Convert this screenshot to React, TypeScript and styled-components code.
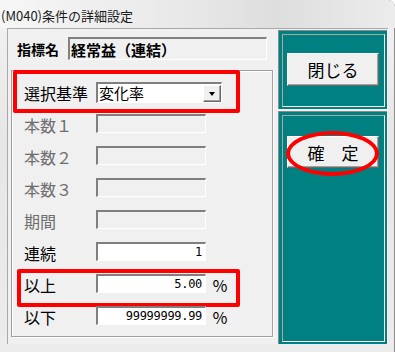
import React from 'react';
import styled, { createGlobalStyle } from 'styled-components';

const JP = `"Noto Sans CJK JP", "Noto Sans", sans-serif`;
const MONO = `"DejaVu Sans Mono", "Liberation Mono", monospace`;

const GlobalStyle = createGlobalStyle`
  body {
    margin: 0;
    background: #ffffff;
  }
  * {
    box-sizing: border-box;
  }
`;

const Window = styled.div`
  width: 395px;
  height: 352px;
  display: flex;
  flex-direction: column;
  background: linear-gradient(180deg, #f3f3f3 0%, #e6e6e6 40%, #ececec 100%);
  border-top-right-radius: 7px;
  box-shadow: inset -1px 1px 0 #8c8c8c;
  overflow: hidden;
`;

const TitleBar = styled.div`
  height: 28px;
  display: flex;
  align-items: center;
  padding: 2px 0 0 1px;
  background: linear-gradient(90deg, #f6f6f6 0%, #e9e9e9 45%, #dedede 70%, #ececec 100%);
`;

const Title = styled.span`
  font-family: ${JP};
  font-size: 13px;
  color: #1a1a1a;
`;

const Client = styled.div`
  margin-left: 7px;
  width: 381px;
  height: 316px;
  display: flex;
  background: #f0f0f0;
  border-top: 1px solid #a9a9a9;
  border-left: 1px solid #a9a9a9;
`;

const LeftCol = styled.div`
  width: 270px;
  display: flex;
  flex-direction: column;
`;

const NameRow = styled.div`
  margin-top: 8px;
  height: 23px;
  padding-left: 9px;
  display: flex;
  align-items: center;
`;

const NameLabel = styled.span`
  width: 51px;
  font-family: ${JP};
  font-size: 14px;
  font-weight: 700;
  color: #000;
`;

const NameBox = styled.div`
  width: 199px;
  height: 23px;
  display: flex;
  align-items: center;
  padding-left: 1px;
  border-style: solid;
  border-width: 2px 1px 1px 2px;
  border-color: #808080 #ffffff #ffffff #808080;
  background: #f0f0f0;
  font-family: ${JP};
  font-size: 15px;
  font-weight: 700;
  color: #000;
`;

const Panel = styled.div`
  margin: 10px 0 0 3px;
  width: 262px;
  height: 267px;
  padding: 11px 0 0 12px;
  border: 1px solid #a0a0a0;
  box-shadow: inset 1px 1px 0 #ffffff, 1px 1px 0 #ffffff;
  display: flex;
  flex-direction: column;
`;

const Rows = styled.div`
  margin-top: 11px;
  display: flex;
  flex-direction: column;
  gap: 13px;
`;

const Row = styled.div<{ $center?: boolean; $h: number }>`
  position: relative;
  height: ${(p) => p.$h}px;
  display: flex;
  align-items: ${(p) => (p.$center ? 'center' : 'flex-end')};
`;

const Label = styled.span<{ $disabled?: boolean }>`
  width: 72px;
  font-family: ${JP};
  font-size: 16px;
  line-height: 16px;
  color: ${(p) => (p.$disabled ? '#6d6d6d' : '#000000')};
`;

const Field = styled.div<{ $disabled?: boolean }>`
  width: 110px;
  height: 19px;
  align-self: flex-start;
  border-style: solid;
  border-width: 2px 1px 1px 2px;
  border-color: #7f7f7f #ffffff #ffffff #7f7f7f;
  background: ${(p) => (p.$disabled ? '#f0f0f0' : '#ffffff')};
  padding-right: 3px;
  text-align: right;
  font-family: ${MONO};
  font-size: 12px;
  letter-spacing: -0.3px;
  line-height: 16px;
  color: #000;
`;

const Suffix = styled.span`
  margin-left: 6px;
  font-family: ${JP};
  font-size: 16px;
  line-height: 16px;
  color: #000;
`;

const Select = styled.div`
  width: 126px;
  height: 21px;
  display: flex;
  border-style: solid;
  border-width: 2px 1px 1px 2px;
  border-color: #7f7f7f #ffffff #ffffff #7f7f7f;
  background: #ffffff;
`;

const SelectText = styled.span`
  flex: 1;
  padding-left: 1px;
  font-family: ${JP};
  font-size: 15px;
  line-height: 18px;
  color: #000;
`;

const DropButton = styled.span`
  width: 18px;
  height: 17px;
  margin-top: 1px;
  display: flex;
  align-items: center;
  justify-content: center;
  background: #f0f0f0;
  border: 1px solid;
  border-color: #ffffff #696969 #696969 #ffffff;
  box-shadow: inset -1px -1px 0 #a0a0a0;

  &::after {
    content: '';
    border-left: 3.5px solid transparent;
    border-right: 3.5px solid transparent;
    border-top: 4px solid #000;
  }
`;

const Highlight = styled.span<{ $x: number; $y: number; $w: number; $h: number }>`
  position: absolute;
  left: ${(p) => p.$x}px;
  top: ${(p) => p.$y}px;
  width: ${(p) => p.$w}px;
  height: ${(p) => p.$h}px;
  border: 4px solid #ff0000;
  border-radius: 2px;
  pointer-events: none;
`;

const RightCol = styled.div`
  width: 109px;
  display: flex;
  flex-direction: column;
`;

const TealPanel = styled.div<{ $top: number; $h?: number }>`
  margin-top: ${(p) => p.$top}px;
  height: ${(p) => (p.$h ? `${p.$h}px` : 'auto')};
  flex: ${(p) => (p.$h ? '0 0 auto' : '1')};
  padding: 3px 2px 2px 3px;
  background: #008080;
  border-top: 1px solid #8a8a8a;
  border-left: 1px solid #8a8a8a;
  display: flex;
`;

const InnerFrame = styled.div<{ $pad: number }>`
  flex: 1;
  padding: ${(p) => p.$pad}px 0 0 4px;
  border: 1px solid;
  border-color: #a8a8a8 #ffffff #ffffff #a8a8a8;
`;

const ButtonWrap = styled.div`
  position: relative;
  width: 92px;
`;

const Button = styled.div<{ $h: number }>`
  width: 92px;
  height: ${(p) => p.$h}px;
  display: flex;
  align-items: center;
  justify-content: center;
  background: #f0f0f0;
  border: 1px solid;
  border-color: #ffffff #696969 #696969 #ffffff;
  box-shadow: inset -1px -1px 0 #a0a0a0;
  font-family: ${JP};
  font-size: 17px;
  color: #000;
`;

const Ellipse = styled.span`
  position: absolute;
  left: -1px;
  top: -5px;
  width: 93px;
  height: 45px;
  border: 4px solid #ff0000;
  border-radius: 50%;
  pointer-events: none;
`;

type RowData = {
  label: string;
  value?: string;
  disabled?: boolean;
  suffix?: boolean;
  mark?: boolean;
};

const rows: RowData[] = [
  { label: '本数１', disabled: true },
  { label: '本数２', disabled: true },
  { label: '本数３', disabled: true },
  { label: '期間', disabled: true },
  { label: '連続', value: '1' },
  { label: '以上', value: '5.00', suffix: true, mark: true },
  { label: '以下', value: '99999999.99', suffix: true },
];

export default function App() {
  return (
    <>
      <GlobalStyle />
      <Window>
        <TitleBar>
          <Title>(M040)条件の詳細設定</Title>
        </TitleBar>
        <Client>
          <LeftCol>
            <NameRow>
              <NameLabel>指標名</NameLabel>
              <NameBox>経常益（連結）</NameBox>
            </NameRow>
            <Panel>
              <Row $center $h={21}>
                <Label>選択基準</Label>
                <Select>
                  <SelectText>変化率</SelectText>
                  <DropButton />
                </Select>
                <Highlight $x={-11} $y={-12} $w={227} $h={43} />
              </Row>
              <Rows>
                {rows.map((r) => (
                  <Row key={r.label} $h={19}>
                    <Label $disabled={r.disabled}>{r.label}</Label>
                    <Field $disabled={r.disabled}>{r.value}</Field>
                    {r.suffix && <Suffix>％</Suffix>}
                    {r.mark && <Highlight $x={-7} $y={-5} $w={223} $h={38} />}
                  </Row>
                ))}
              </Rows>
            </Panel>
          </LeftCol>
          <RightCol>
            <TealPanel $top={1} $h={79}>
              <InnerFrame $pad={18}>
                <Button $h={33}>閉じる</Button>
              </InnerFrame>
            </TealPanel>
            <TealPanel $top={2}>
              <InnerFrame $pad={20}>
                <ButtonWrap>
                  <Button $h={32}>確　定</Button>
                  <Ellipse />
                </ButtonWrap>
              </InnerFrame>
            </TealPanel>
          </RightCol>
        </Client>
      </Window>
    </>
  );
}
